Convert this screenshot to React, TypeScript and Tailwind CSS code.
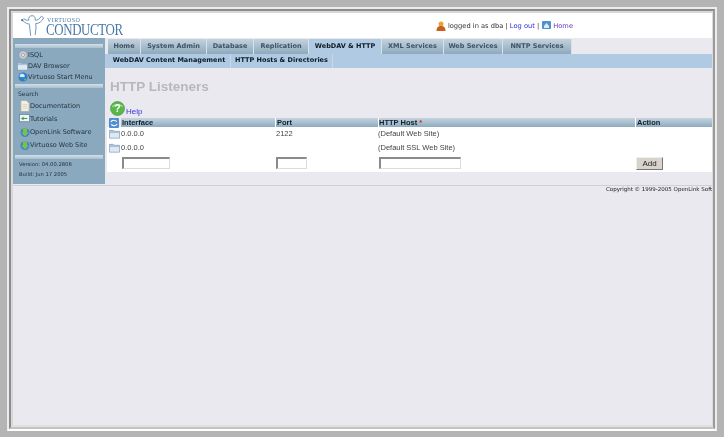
import type { ReactNode } from 'react'

const tabs = [
  { label: 'Home', width: 'w-[33px]', active: false },
  { label: 'System Admin', width: 'w-[66px]', active: false },
  { label: 'Database', width: 'w-[47px]', active: false },
  { label: 'Replication', width: 'w-[55px]', active: false },
  { label: 'WebDAV & HTTP', width: 'w-[73px]', active: true },
  { label: 'XML Services', width: 'w-[62px]', active: false },
  { label: 'Web Services', width: 'w-[59px]', active: false },
  { label: 'NNTP Services', width: 'w-[69px]', active: false },
]

function Gear(): JSX.Element {
  return (
    <svg width="10" height="10" viewBox="0 0 13 13">
      <circle cx="6.5" cy="6.5" r="5.5" fill="#c9ced3" stroke="#8b95a0" />
      <circle cx="6.5" cy="6.5" r="2" fill="#f2f2f2" stroke="#8b95a0" />
    </svg>
  )
}

function Folder(): JSX.Element {
  return (
    <svg width="11" height="10" viewBox="0 0 12 10">
      <path d="M0.5 2V1h4l1 1h6v7.5h-11z" fill="#a9c3dc" stroke="#7f97ad" strokeWidth="0.7" />
      <path d="M1 4h10v5H1z" fill="#dfe9f3" />
    </svg>
  )
}

function Globe(): JSX.Element {
  return (
    <svg width="10" height="10" viewBox="0 0 12 12">
      <circle cx="6" cy="6" r="5.5" fill="#2f7fd0" />
      <path d="M2 4c2-3 5-2 6 0s-2 3-3 2-3 2-3-2z" fill="#dcebf7" />
      <path d="M7 8h3l-2 2.5z" fill="#7ec24a" />
    </svg>
  )
}

function Doc(): JSX.Element {
  return (
    <svg width="10" height="12" viewBox="0 0 11 13">
      <path d="M1 .5h6l3 3v9H1z" fill="#f3efe4" stroke="#a8a8a0" strokeWidth="0.8" />
      <path d="M3 5h5M3 7h5M3 9h5" stroke="#c8c4b8" strokeWidth="0.7" />
    </svg>
  )
}

function Tutorial(): JSX.Element {
  return (
    <svg width="11" height="10" viewBox="0 0 12 11">
      <rect x="0.5" y="0.5" width="11" height="8" fill="#eef3f8" stroke="#5f7f9f" strokeWidth="0.8" />
      <path d="M2 5l3-2v1.4h4v1.2H5V7z" fill="#3aa13a" />
    </svg>
  )
}

function Shield(): JSX.Element {
  return (
    <svg width="10" height="11" viewBox="0 0 12 13">
      <circle cx="6" cy="6.5" r="5.5" fill="#3f86c8" />
      <path d="M3.5 1.5h5v5h2L6 11 1.500 6.500h2z" fill="#7cc04a" />
    </svg>
  )
}

function Refresh(): JSX.Element {
  return (
    <svg width="10" height="10" viewBox="0 0 11 11">
      <rect width="11" height="11" rx="1" fill="#4f8fd0" />
      <path d="M2 4.500c1-2.500 5-2.500 6.500-.5M9 6.500c-1 2.500-5 2.500-6.500.5" fill="none" stroke="#fff" strokeWidth="1.200" />
    </svg>
  )
}

function Logo(): JSX.Element {
  return (
    <svg width="25" height="25" viewBox="0 0 28 25" fill="none" stroke="#6f93b5" strokeWidth="1.100">
      <circle cx="2.500" cy="6.500" r="1.300" fill="#3f6f9f" stroke="none" />
      <path d="M3 7c3 3 6 4 8 4M4 5c2 1 4 2 6 1.500-1-2 .5-5 3.500-5s4 2.500 3.500 5c2 .5 5-1 7-4.500l2.500 2c-2 4-5 6-9 6.500l.5 4-1 8.500M10.500 11.500l.5 4 1 8.500" />
    </svg>
  )
}

function HelpIcon(): JSX.Element {
  return (
    <svg width="15" height="15" viewBox="0 0 15 15">
      <circle cx="7.500" cy="7.500" r="7" fill="#58b84a" stroke="#3c8f35" strokeWidth="0.600" />
      <path d="M1.800 6C3 2 12 2 13.200 6 10 4.500 5 4.500 1.800 6z" fill="#a9e09c" />
      <text x="7.500" y="11" textAnchor="middle" fontSize="10" fontWeight="700" fill="#fff" fontFamily="Liberation Sans, sans-serif">?</text>
    </svg>
  )
}

function SideItem({ icon, label, className }: { icon: ReactNode; label: string; className: string }): JSX.Element {
  return (
    <div className={`flex items-center whitespace-nowrap text-[6.5px] leading-none text-[#26333d] ${className}`}>
      <span className="flex w-[11px] shrink-0 justify-center">{icon}</span>
      <span>{label}</span>
    </div>
  )
}

function Sidebar(): JSX.Element {
  return (
    <aside className="flex h-[146px] w-[92px] shrink-0 flex-col bg-[#8aa9bf] px-[2px] pt-[6px] font-['DejaVu_Sans',sans-serif]">
      <div className="h-[4px] bg-gradient-to-b from-[#d5e0e8] to-[#a9c0d0]" />
      <div className="flex h-[36px] flex-col justify-center gap-[1px] pl-[2px]">
        <SideItem icon={<Gear />} label="ISQL" className="h-[10px]" />
        <SideItem icon={<Folder />} label="DAV Browser" className="h-[10px]" />
        <SideItem icon={<Globe />} label="Virtuoso Start Menu" className="h-[10px]" />
      </div>
      <div className="h-[4px] bg-gradient-to-b from-[#d5e0e8] to-[#a9c0d0]" />
      <div className="pl-[3px] pt-[1px] text-[6px] leading-[9px] text-[#26333d]">Search</div>
      <div className="flex h-[57px] flex-col gap-[3px] pl-[4px] pt-[3px]">
        <SideItem icon={<Doc />} label="Documentation" className="h-[10px]" />
        <SideItem icon={<Tutorial />} label="Tutorials" className="h-[10px]" />
        <SideItem icon={<Shield />} label="OpenLink Software" className="h-[10px]" />
        <SideItem icon={<Shield />} label="Virtuoso Web Site" className="h-[10px]" />
      </div>
      <div className="h-[4px] bg-gradient-to-b from-[#d5e0e8] to-[#a9c0d0]" />
      <div className="pl-[4px] text-[5.25px] leading-[10px] text-[#26333d]">
        <div>Version: 04.00.2806</div>
        <div>Build: Jun 17 2005</div>
      </div>
    </aside>
  )
}

function Tabs(): JSX.Element {
  return (
    <div className="flex h-[16px] bg-[#e9e9ef] pl-[3px] pt-[1px] font-['DejaVu_Sans',sans-serif] text-[6.5px] font-bold">
      {tabs.map((tab) => (
        <div
          key={tab.label}
          className={`${tab.width} flex items-center justify-center border-r border-[#d9e2e9] ${
            tab.active ? 'bg-[#afcae2] text-[#0d1a24]' : 'bg-gradient-to-b from-[#c3d2dd] to-[#8eaabd] text-[#3d5265]'
          }`}
        >
          {tab.label}
        </div>
      ))}
    </div>
  )
}

function Listeners(): JSX.Element {
  const head = 'flex h-[9px] items-center bg-gradient-to-b from-[#c5d4df] to-[#8fabc0] text-[7.5px] font-bold text-[#10202c]'
  const row1 = 'flex h-[14px] items-center text-[7.5px] text-[#444]'
  const row2 = 'flex h-[13px] items-center text-[7.5px] text-[#444]'
  const input = 'block h-[12px] border border-t-2 border-l-2 border-[#dcdcdc] border-t-[#8a8a8a] border-l-[#8a8a8a] bg-white'
  return (
    <div className="ml-[2px] grid grid-cols-[14px_154px_103px_257px_77px] bg-white font-['Liberation_Sans',sans-serif]">
      <div className="flex h-[9px] justify-center bg-[#e9e9ef]"><Refresh /></div>
      <div className={`${head} pl-[1px]`}>Interface</div>
      <div className={`${head} ml-[1px] pl-[1px]`}>Port</div>
      <div className={`${head} ml-[1px]`}>
        HTTP Host&nbsp;<span className="text-[#d22]">*</span>
      </div>
      <div className={`${head} ml-[1px] pl-[1px]`}>Action</div>

      <div className={`${row1} justify-center`}><Folder /></div>
      <div className={row1}>0.0.0.0</div>
      <div className={`${row1} pl-[1px]`}>2122</div>
      <div className={row1}>(Default Web Site)</div>
      <div className={row1} />

      <div className={`${row2} justify-center`}><Folder /></div>
      <div className={row2}>0.0.0.0</div>
      <div className={row2} />
      <div className={row2}>(Default SSL Web Site)</div>
      <div className={row2} />

      <div className="h-[18px]" />
      <div className="pl-[1px] pt-[3px]"><input className={`${input} w-[48px]`} /></div>
      <div className="pl-[1px] pt-[3px]"><input className={`${input} w-[31px]`} /></div>
      <div className="pl-[1px] pt-[3px]"><input className={`${input} w-[82px]`} /></div>
      <div className="pl-[1px] pt-[3px]">
        <button
          type="button"
          className="block h-[13px] w-[27px] border border-[#eee] border-r-[#777] border-b-[#777] bg-[#d8d4cc] text-[8px] leading-none text-[#222]"
        >
          Add
        </button>
      </div>
    </div>
  )
}

export default function App(): JSX.Element {
  return (
    <div className="h-[437px] w-[724px] overflow-hidden bg-[#b4b4b4] pb-[6px] pl-[7px] pr-[7px] pt-[7px] blur-[0.5px]">
      <div className="h-full border-2 border-[#ececec] border-b-white">
        <div className="h-full border-2 border-t-[#8c8c8c] border-l-[#8c8c8c] border-r-[#9a9a9a] border-b-[#c4c4c4]">
          <div className="flex h-full flex-col border-2 border-t-[#d8d8d8] border-l-[#d8d8d8] border-r-[1px] border-r-[#dcdcdc] border-b-[#e0e0e0] bg-[#e9e9ef]">
            <header className="flex h-[25px] shrink-0 items-center justify-between bg-white pl-[7px] pr-[139px]">
              <div className="flex items-start gap-[1px]">
                <Logo />
                <div className="pt-[4px] font-['Liberation_Serif',serif] leading-none text-[#4a79a8]">
                  <div className="pl-[1px] text-[6px] leading-[7px] tracking-[0.4px]">VIRTUOSO</div>
                  <div className="origin-left scale-x-[0.76] whitespace-nowrap text-[17px] leading-[11px] tracking-[-0.5px]">CONDUCTOR</div>
                </div>
              </div>
              <div className="flex items-center gap-[2px] pt-[2px] font-['DejaVu_Sans',sans-serif] text-[6.7px] text-[#333]">
                <svg width="10" height="10" viewBox="0 0 10 10">
                  <circle cx="5" cy="3" r="2.500" fill="#e8a23c" />
                  <path d="M0.500 10c0-4 2-5 4.500-5s4.500 1 4.500 5z" fill="#c8601c" />
                </svg>
                <span>
                  logged in as dba | <span className="text-[#2a2ae0]">Log out</span> |
                </span>
                <svg width="9" height="10" viewBox="0 0 9 10" className="ml-[1px]">
                  <rect width="9" height="8" rx="1" fill="#4f93cc" />
                  <path d="M2 5l2.500-3L7 5v2H2z" fill="#dcebf7" />
                </svg>
                <span className="text-[#6a35c0]">Home</span>
              </div>
            </header>
            <div className="flex flex-1 flex-col">
              <div className="flex h-[146px]">
                <Sidebar />
                <main className="flex-1">
                  <Tabs />
                  <div className="flex h-[14px] bg-[#afcae2] pl-[3px] font-['DejaVu_Sans',sans-serif] text-[6.5px] font-bold text-[#0d1a24]">
                    <div className="flex w-[123px] items-center justify-center border-r border-[#c7d8e8]">WebDAV Content Management</div>
                    <div className="flex w-[102px] items-center justify-center border-r border-[#c7d8e8]">HTTP Hosts & Directories</div>
                  </div>
                  <div className="pt-[11px]">
                    <h1 className="pl-[5px] font-['Liberation_Sans',sans-serif] text-[13.5px] font-bold leading-[16px] text-[#b8b8bc]">HTTP Listeners</h1>
                    <div className="flex h-[23px] items-end gap-[1px] pb-[2px] pl-[5px] font-['Liberation_Sans',sans-serif] text-[8px] leading-none text-[#3a30e0]">
                      <HelpIcon />
                      <span>Help</span>
                    </div>
                    <Listeners />
                  </div>
                </main>
              </div>
              <footer className="mt-[1px] h-[8px] border-t border-[#d0d0d4] font-['DejaVu_Sans',sans-serif] text-[5.5px] leading-[7px] text-[#222]">
                <div className="ml-auto w-[106px] overflow-hidden whitespace-nowrap">Copyright © 1999-2005 OpenLink Software</div>
              </footer>
            </div>
          </div>
        </div>
      </div>
    </div>
  )
}
